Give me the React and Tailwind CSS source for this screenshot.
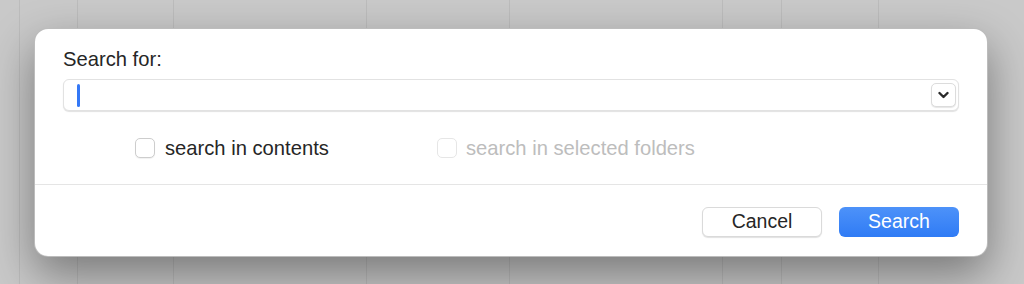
const columns = [20, 58, 96, 193, 143, 213, 59, 97];

const Checkbox = ({ disabled }) => (
  <span
    className={
      "w-[20px] h-[20px] rounded-[5px] bg-white border shrink-0 " +
      (disabled
        ? "border-[#e6e6e6]"
        : "border-[#cdcdcd] shadow-[0_1px_1px_rgba(0,0,0,0.06)]")
    }
  />
);

export default function App() {
  return (
    <div
      className="relative w-[1024px] h-[284px] overflow-hidden bg-[#c9c9c9]"
      style={{ fontFamily: '"Liberation Sans", Arial, sans-serif' }}
    >
      {/* background table columns */}
      <div className="flex h-full">
        {columns.map((w, i) => (
          <div key={i} className="h-full border-r border-[#bcbcbc] shrink-0" style={{ width: w }} />
        ))}
      </div>

      {/* dialog */}
      <div className="absolute left-[34px] top-[28px] w-[954px] bg-white rounded-[14px] border border-[#a0a0a0]/70 shadow-[0_18px_45px_rgba(0,0,0,0.4)] flex flex-col">
        <div className="pt-[18px] px-[28px]">
          <div className="text-[20.2px] leading-[24px] text-[#262626]">Search for:</div>
          <div className="mt-[8px] h-[32px] rounded-[6px] border border-[#e2e2e2] shadow-[0_1px_1px_rgba(0,0,0,0.12)] bg-white flex items-center justify-between pl-[13px] pr-[2px]">
            <span className="w-[3px] h-[23px] rounded-full bg-[#3478f6]" />
            <button className="w-[25px] h-[24px] rounded-[5px] border border-[#dcdcdc] shadow-[0_1px_1px_rgba(0,0,0,0.1)] bg-white flex items-center justify-center">
              <svg width="11" height="8" viewBox="0 0 11 8" fill="none">
                <path d="M1.5 2 L5.5 6 L9.5 2" stroke="#2a2a2a" strokeWidth="2.4" strokeLinecap="round" strokeLinejoin="round" />
              </svg>
            </button>
          </div>
          <div className="mt-[27px] ml-[72px] flex items-center h-[20px]">
            <label className="w-[302px] flex items-center gap-[10px]">
              <Checkbox />
              <span className="text-[20.2px] leading-[24px] text-[#262626]">search in contents</span>
            </label>
            <label className="flex items-center gap-[9px]">
              <Checkbox disabled />
              <span className="text-[20.2px] leading-[24px] text-[#bdbdbd]">search in selected folders</span>
            </label>
          </div>
        </div>
        <div className="mt-[26px] h-px bg-[#e5e5e5]" />
        <div className="flex justify-end gap-[17px] px-[28px] pt-[22px] pb-[19px]">
          <button className="w-[120px] h-[30px] rounded-[6px] bg-white border border-[#dadada] shadow-[0_1px_1px_rgba(0,0,0,0.12)] text-[19.5px] text-[#262626] flex items-center justify-center">
            Cancel
          </button>
          <button className="w-[120px] h-[30px] rounded-[6px] bg-gradient-to-b from-[#4d92f9] to-[#2f7bf5] text-[19.5px] text-white flex items-center justify-center">
            Search
          </button>
        </div>
      </div>
    </div>
  );
}
